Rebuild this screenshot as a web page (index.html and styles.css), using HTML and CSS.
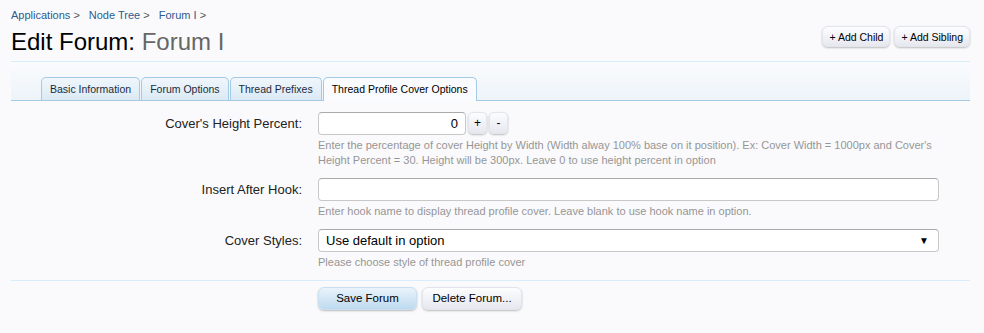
FILE: index.html
```html
<!DOCTYPE html>
<html>
<head>
<meta charset="utf-8">
<link rel="stylesheet" href="styles.css">
</head>
<body>
<div class="page">
  <div class="breadcrumb">
    <a class="crumb">Applications <span class="arrow">&gt;</span></a>
    <a class="crumb">Node Tree <span class="arrow">&gt;</span></a>
    <a class="crumb">Forum I <span class="arrow">&gt;</span></a>
  </div>
  <div class="title-bar">
    <h1 class="title">Edit Forum: <span class="title-sub">Forum I</span></h1>
    <div class="top-ctrls">
      <a class="btn small">+ Add Child</a>
      <a class="btn small">+ Add Sibling</a>
    </div>
  </div>
  <div class="tabs-bar">
    <ul class="tabs">
      <li class="tab">Basic Information</li>
      <li class="tab">Forum Options</li>
      <li class="tab">Thread Prefixes</li>
      <li class="tab active">Thread Profile Cover Options</li>
    </ul>
  </div>
  <form class="form">
    <div class="row">
      <label class="label">Cover's Height Percent:</label>
      <div class="ctrl">
        <div class="spin">
          <input class="input num" type="text" value="0">
          <button type="button" class="spin-btn">+</button>
          <button type="button" class="spin-btn">-</button>
        </div>
        <p class="explain">Enter the percentage of cover Height by Width (Width alway 100% base on it position). Ex: Cover Width = 1000px and Cover's Height Percent = 30. Height will be 300px. Leave 0 to use height percent in option</p>
      </div>
    </div>
    <div class="row">
      <label class="label">Insert After Hook:</label>
      <div class="ctrl">
        <input class="input wide" type="text" value="">
        <p class="explain">Enter hook name to display thread profile cover. Leave blank to use hook name in option.</p>
      </div>
    </div>
    <div class="row">
      <label class="label">Cover Styles:</label>
      <div class="ctrl">
        <div class="select wide"><span>Use default in option</span><span class="caret">&#9660;</span></div>
        <p class="explain">Please choose style of thread profile cover</p>
      </div>
    </div>
    <div class="submit">
      <div class="submit-btns">
        <button type="button" class="btn primary big">Save Forum</button>
        <button type="button" class="btn big del">Delete Forum...</button>
      </div>
    </div>
  </form>
</div>
</body>
</html>
```
FILE: styles.css
```css
html, body {
  margin: 0;
  padding: 0;
  background: #fafafc;
}
body {
  font-family: "Liberation Sans", Arial, sans-serif;
  color: #222;
}
.page {
  padding: 0 14px 0 11px;
}
.breadcrumb {
  display: flex;
  gap: 9px;
  padding-top: 8px;
  height: 14px;
  font-size: 11px;
  line-height: 14px;
}
.crumb {
  color: #2b5b90;
}
.arrow {
  color: #555;
}
.title-bar {
  display: flex;
  justify-content: space-between;
  align-items: flex-start;
  height: 39px;
  border-bottom: 1px solid #d7edfc;
}
.title {
  margin: 6px 0 0;
  font-weight: normal;
  font-size: 24px;
  line-height: 28px;
  color: #000;
}
.title-sub {
  color: #666;
}
.top-ctrls {
  display: flex;
  gap: 4px;
  margin-top: 4px;
}
.btn {
  display: inline-block;
  box-sizing: border-box;
  white-space: nowrap;
  font-family: "Liberation Sans", Arial, sans-serif;
  font-size: 10.5px;
  line-height: 20px;
  height: 21px;
  padding: 0 5px;
  color: #000;
  text-align: center;
  border: 1px solid #e3e5ec;
  border-radius: 6px;
  background: linear-gradient(#fdfdfe, #e6e8ef);
  box-shadow: 0 1px 2px rgba(0,0,0,0.25);
}
.small {
  padding: 0 6px;
}
.tabs-bar {
  height: 38px;
  display: flex;
  align-items: flex-end;
  background: linear-gradient(#fafbfd, #edf4fa);
  border-bottom: 1px solid #a5cae4;
  padding-left: 30px;
}
.tabs {
  display: flex;
  list-style: none;
  margin: 0 0 -1px;
  padding: 0;
}
.tab {
  height: 22px;
  line-height: 22px;
  font-size: 10.5px;
  color: #1a2b3c;
  padding: 0 8px;
  margin-right: 1px;
  border: 1px solid #a5cae4;
  border-bottom: none;
  border-radius: 5px 5px 0 0;
  background: linear-gradient(#f0f6fb, #dbeaf6);
}
.tab.active {
  background: #fafbfe;
  height: 23px;
  color: #000;
}
.form {
  margin: 0;
  padding-top: 11px;
}
.row {
  display: grid;
  grid-template-columns: 291px 621px;
  column-gap: 16px;
  margin-bottom: 10px;
}
.label {
  text-align: right;
  font-size: 13px;
  line-height: 23px;
  height: 23px;
  color: #222;
}
.ctrl {
  display: flex;
  flex-direction: column;
}
.spin {
  display: flex;
  gap: 2px;
}
.input, .select {
  box-sizing: border-box;
  height: 23px;
  border: 1px solid #c8c8c8;
  border-top-color: #aaa;
  border-radius: 4px;
  background: #fff;
  font-family: "Liberation Sans", Arial, sans-serif;
  font-size: 13px;
  padding: 0 7px;
  margin: 0;
  outline: none;
}
.num {
  width: 148px;
  text-align: right;
}
.wide {
  width: 621px;
}
.spin-btn {
  box-sizing: border-box;
  width: 19px;
  height: 22px;
  padding: 0;
  font-family: "Liberation Sans", Arial, sans-serif;
  font-size: 12px;
  color: #000;
  border: 1px solid #e3e5ec;
  border-radius: 5px;
  background: linear-gradient(#fdfdfe, #e6e8ef);
  box-shadow: 0 1px 2px rgba(0,0,0,0.25);
}
.select {
  display: flex;
  justify-content: space-between;
  align-items: center;
  color: #000;
}
.caret {
  font-size: 10px;
  margin-right: 2px;
}
.explain {
  margin: 3px 0 0;
  font-size: 11px;
  line-height: 15px;
  color: #969696;
}
.submit {
  margin-top: 2px;
  border-top: 1px solid #d7edfc;
  padding: 6px 0 10px 307px;
}
.submit-btns {
  display: flex;
  gap: 5px;
}
.big {
  height: 23px;
  line-height: 21px;
  padding: 0;
  font-size: 11.5px;
  width: 100px;
}
.primary {
  background: linear-gradient(#eaf3fb, #bedaf0);
  border-color: #c9dff0;
  width: 99px;
}
```
